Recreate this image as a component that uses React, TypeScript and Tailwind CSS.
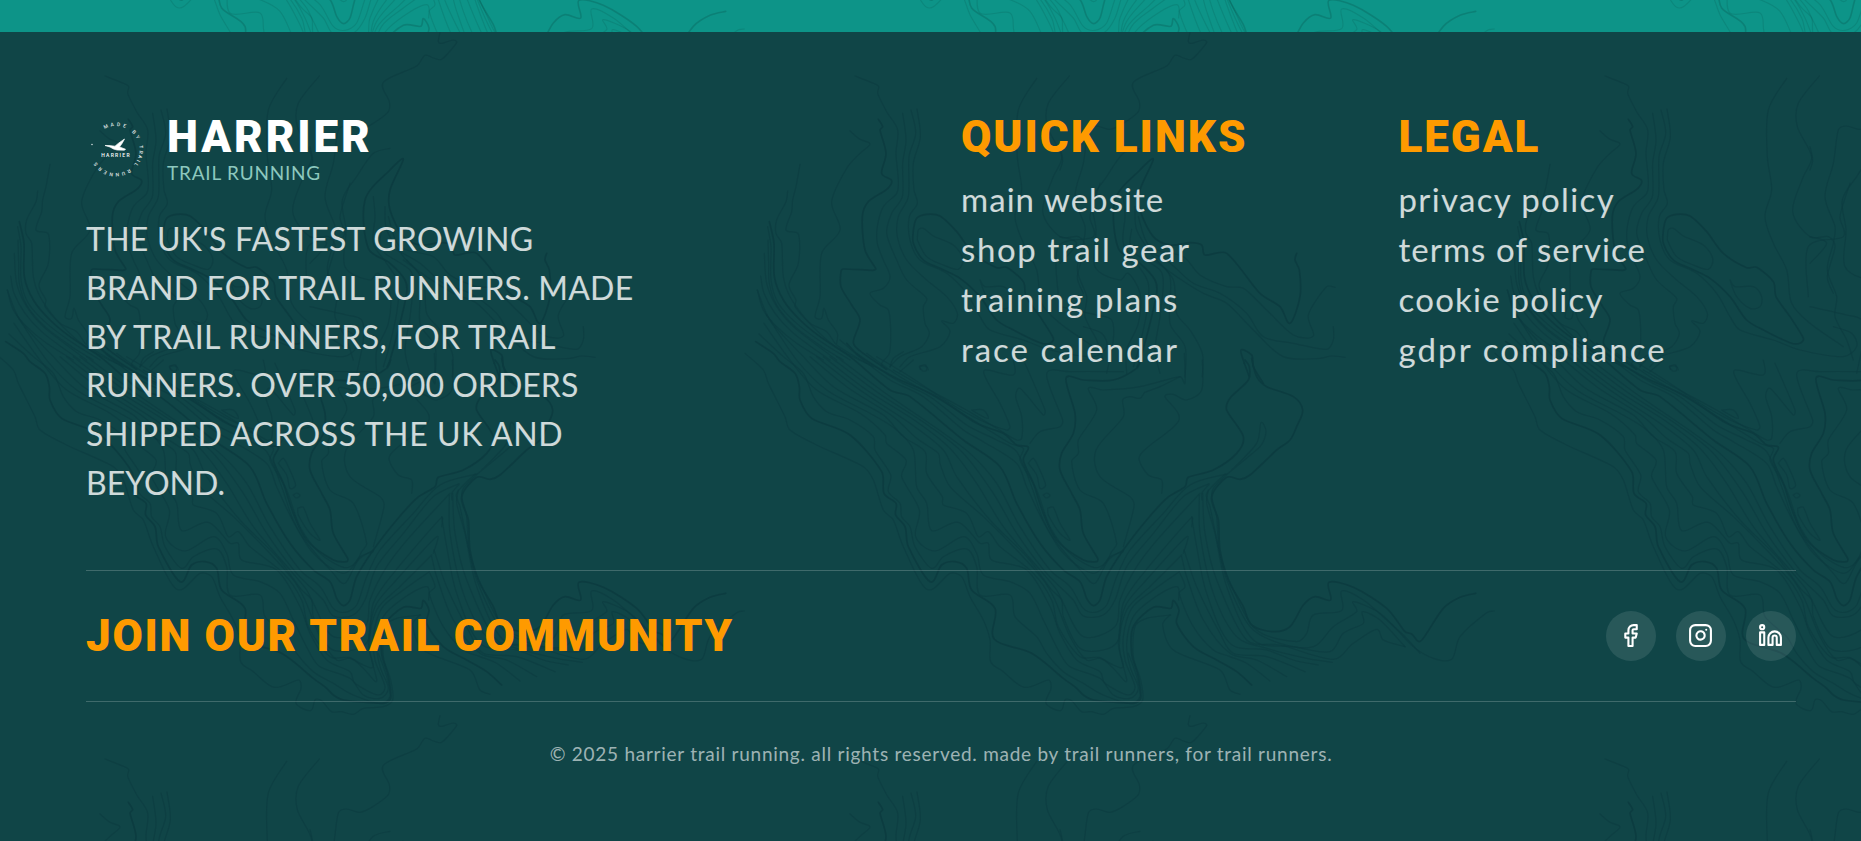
import { Facebook, Instagram, Linkedin } from "lucide-react";

type Sheet = { transform: string; thin: string[]; bold: string[] };

/* Contour survey, split in four sheets. Points are in thirds of a pixel from each sheet's corner. */
const SHEETS: Sheet[] = [
  {
    transform: "translate(740 30) scale(0.33333)",
    thin: [
      "345,138 380,152 415,168 413,190 440,245 473,300 468,370 475,450 470,490 430,530 412,590 412,640 430,690 450,740 430,775 390,790 420,825 445,840 452,900 448,970 425,1000 438,1018",
      "488,250 498,330 488,400 487,500 455,550 440,610 470,690 500,750 560,805 550,830 555,880 568,910 545,950 480,980 450,1010",
      "513,240 527,310 507,380 505,500 475,560 472,620 500,690 560,750 620,800 652,850 640,880 605,873 630,905 600,950 510,980 480,1010",
      "531,237 541,320 520,400 522,480 532,520 508,560 510,630 540,690 620,730 680,790 720,860 750,900 850,930 930,960 1060,980 1100,950 1085,910 1030,890",
      "532,630 535,600 550,595 580,618 640,645 668,685 655,718 610,705 560,680 532,630",
      "720,750 735,770 790,770 815,800 810,830 780,835 740,800 720,750",
      "330,303 360,328 390,342 360,370 320,415 275,515 300,600 245,670 240,800 225,860 245,865 252,835 265,870 292,910 290,940",
      "180,403 168,470 158,510 155,545 138,600 175,612 175,700 147,765 168,810 165,830 210,880 260,905 290,945 380,1000",
      "143,483 138,515 110,570 108,610 125,640 130,740 150,800 200,870 250,920 300,960 400,1010",
      "83,590 93,650 93,750 115,820 170,880 250,940 330,990",
      "84,630 86,700 88,760 110,825 165,890 245,950 310,990",
      "73,670 80,760 110,830 160,890 230,945 290,990",
      "62,738 72,790 105,850 155,905 220,955 270,990",
      "52,780 70,840 110,890 170,940 250,990",
      "890,145 835,240 832,380 845,480 825,560 850,640 890,720 905,820 960,880 1060,950",
      "988,138 925,220 922,290 965,380 940,440 908,545 960,620 1015,620 1035,650 1012,740 1030,790",
      "1080,460 1050,560 1060,620 955,650 955,800",
      "541,1018 540,1008 560,1010 565,1020",
    ],
    bold: [
      "415,268 428,290 420,300 438,370 425,430 455,452 440,478 385,515 367,560 375,660 407,716 398,721 310,717 303,725 303,770 335,825 360,870 340,938 370,970 440,1018",
      "520,600 530,565 560,553 600,558 650,605 700,670 770,713 800,712 850,755 858,800 900,860 940,925 930,940 900,938 830,905 770,870 720,800 660,745 600,715 550,690 520,640 520,600",
    ],
  },
  {
    transform: "translate(1060 30) scale(0.33333)",
    thin: [
      "390,8 385,35 395,40 430,30 440,38 395,88 370,84 345,76 320,108 220,157 238,215 235,245 190,280 150,298 110,288 85,300 70,400 45,500 75,590 70,640 52,720 80,800 75,860 110,930 130,990",
      "240,355 190,370 140,440 97,510 108,600 105,710 180,750 205,730 240,790 235,880 200,960 200,1030",
      "0,350 8,390 0,420",
      "190,500 195,560 190,640 230,700 265,760 260,850 235,960 220,1010",
      "215,598 210,640 225,670 300,720 310,760 300,860 285,960 300,1030",
      "225,530 230,600 280,680 330,740 330,880 375,950 375,1040",
      "290,690 340,750 350,850 390,900 427,970 427,1040",
      "235,560 270,650 370,680 420,735 500,770 550,775 620,840 700,915 760,918 745,855 800,770 825,772",
      "260,660 330,700 400,760 480,790 560,850 610,920 700,940 800,958 820,930 820,890",
      "280,690 350,740 430,790 500,820 580,900 670,980 780,985 815,978 855,982",
      "0,620 50,640 0,700",
      "0,830 110,855 155,870 160,930 140,1030",
    ],
    bold: [
      "232,1010 240,990 265,900 290,790 285,750 240,700 175,655 165,510 240,420 280,388 240,480 240,540 280,620 330,645 390,638 425,645 435,675 500,670 600,790 660,830 690,880 720,800 718,720 705,690 710,670",
      "553,1000 543,960 575,975 580,1010 610,1060",
      "553,1000 568,1040",
    ],
  },
  {
    transform: "translate(750 360) scale(0.33333)",
    thin: [
      "-15,-20 40,30 55,70 105,170 120,210 200,255 340,320 370,360 400,450 430,480 460,560 530,688 600,640 635,650 660,710 700,780 720,840 722,905 760,935 823,982 895,960 903,985 888,1030 932,1052 945,1020 965,1022 995,1055 1025,1055 1060,1063 1090,1045 1150,1040 1178,1020 1172,960 1150,890 1155,800 1190,775 1262,765",
      "27,-78 100,-10 160,40 190,110 230,155 300,180 370,230 375,270 422,345 415,395 450,430 455,470 480,500 495,560 545,625 580,590 650,567 680,620 690,705 780,705 795,770 860,830 890,880 940,935 1000,970 1060,1005 1140,1030 1170,1010 1160,950 1135,880",
      "42,-110 120,0 200,90 330,160 405,225 410,250 468,300 455,350 508,450 497,530 555,573 640,530 680,580 700,645 780,665 840,700 880,780 930,880 960,920 1050,955 1090,1005 1140,1015 1165,985 1140,920 1130,850 1150,770 1210,715 1280,680 1286,720",
      "50,-135 140,0 230,90 360,160 440,210 490,270 500,380 530,430 545,512 625,487 690,550 715,550 725,600 830,630 900,740 930,820 980,900 1050,935 1065,970 1135,1005 1155,980 1125,900 1120,830 1145,745 1210,690 1288,635",
      "22,-210 60,-120 160,-10 250,80 400,165 460,230 525,275 530,340 577,410 580,435 650,460 685,530 715,515 750,560 850,640 905,720 925,800 990,890 1050,893 1090,925 1130,963 1108,860 1130,750 1200,680 1295,585",
      "180,-10 290,80 430,170 500,235 565,280 570,310 600,380 700,470 800,570 880,660 915,720 960,830 1010,900 1050,895 1090,915 1120,920 1105,850 1125,740 1180,670 1310,530 1300,580",
      "200,-10 330,90 480,190 580,270 620,350 720,480 830,590 905,690 935,720 940,770 990,865 1060,870 1105,840 1120,730 1180,640 1325,472 1325,500",
      "220,-10 350,90 500,185 600,265 680,370 760,500 870,630 920,690 940,730 1000,830 1095,800 1110,720 1160,620 1230,530 1350,400",
      "240,-10 380,95 540,200 640,280 730,400 800,520 890,640 970,720 1000,768 1060,765 1095,720 1130,620 1210,520 1300,410 1375,372",
      "260,-10 400,95 560,205 660,280 740,370 810,500 900,630 960,680 1000,745 1035,757 1070,735 1100,650 1140,570 1240,460 1320,375 1430,342",
      "270,-60 340,0 420,60 520,110 640,210 700,245 800,310 830,380 900,520 1000,640 1035,670 1075,600 1120,570",
      "320,-20 440,60 540,110 650,195 740,240 800,275 845,380 880,480 940,580 1030,640 1080,590 1120,575",
      "350,-20 450,50 580,125 700,200 780,250 820,265 810,300 860,390 900,500 960,580 1030,622 1065,610 1085,575 1100,550 1060,430 990,390 965,305 985,280 985,240 1040,150 1015,85 1060,90 1170,80 1290,50 1305,70 1303,-20",
      "380,-10 480,50 600,130 690,180 770,210 780,200 750,130 710,60 705,30 790,45 790,0",
      "430,30 500,70 640,145 740,205 800,240 815,235 815,170 797,110 810,85 880,165 885,150 825,10",
      "840,250 870,215 930,200 938,180 890,42 960,35 1120,35",
      "665,150 700,150 715,175 690,165 665,150",
      "508,20 525,14 530,30 518,33 508,20",
      "835,310 850,295 865,320 887,375 870,385 860,345 835,310",
      "880,405 890,399 900,407 888,414 880,405",
      "893,445 910,442 930,490 960,540 930,520 895,465 893,445",
      "420,20 430,-5 460,-25",
      "450,35 490,0",
    ],
    bold: [
      "17,-55 70,-20 90,5 135,40 148,80 150,120 185,175 300,225 395,335 402,400 438,430 437,465 465,500 475,560 540,665 575,615 615,605 650,625 665,690 735,745 733,838 845,880 940,955 980,985 1000,1005 1030,1020 1150,1030 1172,1015 1165,950 1145,880 1150,800 1210,742 1262,745 1270,722 1287,750 1280,790 1330,860 1400,900 1460,935 1505,975",
      "58,-415 72,-350 73,-250 100,-180 150,-120 210,-70 300,-10 420,90 480,110 640,240 750,320 800,430 870,550 940,630 990,665 1010,715 1030,737 1050,720 1070,650 1120,570 1190,480 1250,415 1305,380 1315,352 1390,330 1460,280 1480,230 1430,150 1440,115 1495,60 1498,20 1485,0",
      "290,-50 330,-10 430,50 560,110 680,190 760,220 800,255 835,262 820,300 850,370 880,460 920,540 1000,600 1040,605 1043,595 1000,520 990,450 965,400 930,330 935,280 970,220 975,160 948,55 1000,60 1090,60 1160,25 1172,0",
    ],
  },
  {
    transform: "translate(1080 360) scale(0.33333)",
    thin: [
      "270,765 248,795 280,870 420,930 450,990 480,1003",
      "300,640 315,680 298,700 340,800 400,870 450,890 500,910 570,963",
      "305,590 320,650 370,780 450,880 530,900 620,950",
      "312,570 350,680 420,820 460,880 560,890 675,935",
      "335,470 350,560 380,700 450,850 560,870 640,900 715,915",
      "358,405 360,520 400,700 470,830 560,865 680,895 757,907",
      "368,400 375,520 410,660 500,840 600,855 760,898 820,850 890,808 910,840 975,860",
      "385,390 380,430 405,520 440,680 520,840 640,860 750,875 790,820 850,790 848,755 900,780 975,860",
      "388,372 365,400 366,420",
      "435,342 380,400 390,440 415,560 440,660 510,800 600,850 700,860 760,800 830,755 820,725 900,760 1000,860 1060,895 1115,898 1140,830 1220,758 1243,753",
      "455,330 530,250 543,188 558,215 540,260 400,385 410,470 420,580 460,690 530,810 650,845 680,820 700,765 785,752 785,693 850,720 920,780 975,830 1020,880",
      "245,400 245,360 205,345 177,295 205,260 297,180 255,110 280,103 320,120 365,90 367,0",
      "130,560 162,440 150,410 60,350 48,270 130,170 128,120 150,110 180,115 195,97 240,80 300,50",
    ],
    bold: [
      "515,-5 530,50 560,80 640,110 668,150 650,200 630,240 590,270 510,345 480,358 440,352 395,410 415,480 420,570 445,660 490,740 515,795 580,815 630,800 670,735 705,710 752,720 747,667 820,682 920,745 975,815 995,822 1018,845 1040,820 1090,745 1140,712 1187,700",
    ],
  },
];

function smooth(points: string) {
  const p = points.split(" ").map((s) => s.split(",").map(Number));
  let d = `M${p[0][0]} ${p[0][1]}`;
  for (let i = 0; i < p.length - 1; i++) {
    const a = p[i - 1] ?? p[i];
    const b = p[i];
    const c = p[i + 1];
    const e = p[i + 2] ?? c;
    const k = Math.hypot(c[0] - b[0], c[1] - b[1]);
    const t1 = Math.min(1 / 6, (k * 0.33) / (Math.hypot(c[0] - a[0], c[1] - a[1]) || 1));
    const t2 = Math.min(1 / 6, (k * 0.33) / (Math.hypot(e[0] - b[0], e[1] - b[1]) || 1));
    d += `C${b[0] + (c[0] - a[0]) * t1} ${b[1] + (c[1] - a[1]) * t1} ${c[0] - (e[0] - b[0]) * t2} ${c[1] - (e[1] - b[1]) * t2} ${c[0]} ${c[1]}`;
  }
  return d;
}

function Contours({ offsets, className }: { offsets: [number, number][]; className: string }) {
  return (
    <svg className={`pointer-events-none absolute inset-0 h-full w-full ${className}`} fill="none" aria-hidden="true">
      {offsets.map(([x, y]) => (
        <g key={`${x},${y}`} transform={`translate(${x} ${y})`} stroke="currentColor" strokeLinecap="round">
          {SHEETS.map((s) => (
            <g key={s.transform} transform={s.transform}>
              {s.thin.map((l) => (
                <path key={l} d={smooth(l)} strokeWidth={3.6} opacity={0.58} />
              ))}
              {s.bold.map((l) => (
                <path key={l} d={smooth(l)} strokeWidth={5} opacity={0.85} />
              ))}
            </g>
          ))}
        </g>
      ))}
    </svg>
  );
}

const RING: [string, number][] = [
  ["M", -24], ["A", -9], ["D", 6], ["E", 20],
  ["B", 46], ["Y", 60],
  ["T", 84], ["R", 96], ["A", 107], ["I", 117], ["L", 127],
  ["R", 149], ["U", 163], ["N", 177], ["N", 191], ["E", 205], ["R", 219], ["S", 234],
];

function Logo() {
  return (
    <svg width="64" height="64" viewBox="0 0 64 64" className="shrink-0 fill-white font-['Roboto',sans-serif] font-medium">
      {RING.map(([c, a], i) => (
        <text key={i} x="30" y="8" fontSize="5" textAnchor="middle" opacity="0.85" transform={`rotate(${a} 30 31.5)`}>
          {c}
        </text>
      ))}
      <circle cx="6" cy="26.5" r="0.8" opacity="0.8" />
      <path d="M19 27.5 L23 27.5 L29 28.2 L32.5 25.2 L38.5 21 L36 25.5 L33.5 29 L39.5 31.2 L38.5 32.2 L31 32 L27.5 31 L24 29 Z" stroke="#fff" strokeWidth="0.7" strokeLinejoin="round" />
      <text x="30" y="39" fontSize="5" textAnchor="middle" letterSpacing="1.3">HARRIER</text>
    </svg>
  );
}

const BLURB = [
  { text: "THE UK'S FASTEST GROWING", tracking: "tracking-[0.25px]" },
  { text: "BRAND FOR TRAIL RUNNERS. MADE", tracking: "tracking-[0.2px]" },
  { text: "BY TRAIL RUNNERS, FOR TRAIL", tracking: "tracking-[0.38px]" },
  { text: "RUNNERS. OVER 50,000 ORDERS", tracking: "tracking-[0.03px]" },
  { text: "SHIPPED ACROSS THE UK AND", tracking: "tracking-[0.64px]" },
  { text: "BEYOND.", tracking: "tracking-[0px]" },
];

const QUICK = [
  { text: "main website", tracking: "tracking-[1.05px]" },
  { text: "shop trail gear", tracking: "tracking-[1.63px]" },
  { text: "training plans", tracking: "tracking-[1.75px]" },
  { text: "race calendar", tracking: "tracking-[1.98px]" },
];

const LEGAL = [
  { text: "privacy policy", tracking: "tracking-[1.35px]" },
  { text: "terms of service", tracking: "tracking-[1.07px]" },
  { text: "cookie policy", tracking: "tracking-[1.24px]" },
  { text: "gdpr compliance", tracking: "tracking-[2.1px]" },
];

const HEADING = "font-['Roboto',sans-serif] text-[44px] leading-[44px] font-black whitespace-nowrap";

function LinkColumn({ title, tracking, links }: { title: string; tracking: string; links: typeof QUICK }) {
  return (
    <div>
      <h3 className={`${HEADING} ${tracking} text-[#fe9a00]`}>{title}</h3>
      <ul className="mt-[15px]">
        {links.map((l) => (
          <li key={l.text} className="h-[50px] whitespace-nowrap">
            <a href="#" className={`text-[33px] leading-[50px] text-white/80 ${l.tracking}`}>{l.text}</a>
          </li>
        ))}
      </ul>
    </div>
  );
}

export default function App() {
  return (
    <div className="flex h-[841px] w-full flex-col overflow-hidden bg-[#104547] font-['Lato',sans-serif]">
      <div className="relative h-8 shrink-0 overflow-hidden bg-[#0d9488]">
        <Contours className="text-black/15" offsets={[[-750, -582], [0, -582], [750, -582]]} />
      </div>
      <footer className="relative flex-1 overflow-hidden">
        <Contours className="text-[#0c3b3f]" offsets={[[-750, -32], [0, -32], [750, -32], [-750, 651], [0, 651], [750, 651]]} />
        <div className="relative ml-[86px] flex w-[1710px] flex-col">
          <div className="grid h-[538px] grid-cols-4 gap-10 pt-[83px]">
            <div className="col-span-2">
              <div className="flex h-[72px] items-start">
                <div className="pt-[3px]">
                  <Logo />
                </div>
                <div className="pl-[17px]">
                  <h2 className={`${HEADING} tracking-[2.9px] text-white`}>HARRIER</h2>
                  <p className="mt-[2px] text-[19px] leading-6 tracking-[0.78px] whitespace-nowrap text-[#8dc8be]">TRAIL RUNNING</p>
                </div>
              </div>
              <p className="mt-[28px] text-[32px] leading-[48.75px] whitespace-nowrap text-white/80">
                {BLURB.map((l) => (
                  <span key={l.text} className={`block ${l.tracking}`}>{l.text}</span>
                ))}
              </p>
            </div>
            <LinkColumn title="QUICK LINKS" tracking="tracking-[1.98px]" links={QUICK} />
            <LinkColumn title="LEGAL" tracking="tracking-[1.9px]" links={LEGAL} />
          </div>
          <div className="flex h-[132px] items-center justify-between border-y border-white/20">
            <h3 className={`${HEADING} tracking-[1.67px] text-[#fe9a00]`}>JOIN OUR TRAIL COMMUNITY</h3>
            <div className="flex gap-5">
              {[Facebook, Instagram, Linkedin].map((Icon, i) => (
                <a key={i} href="#" className="flex size-[50px] items-center justify-center rounded-full bg-white/10 pr-px pb-px text-white">
                  <Icon size={25} strokeWidth={2} />
                </a>
              ))}
            </div>
          </div>
          <p className="mt-10 text-center text-[19px] leading-6 tracking-[0.74px] whitespace-nowrap text-white/60">
            © 2025 harrier trail running. all rights reserved. made by trail runners, for trail runners.
          </p>
        </div>
      </footer>
    </div>
  );
}
